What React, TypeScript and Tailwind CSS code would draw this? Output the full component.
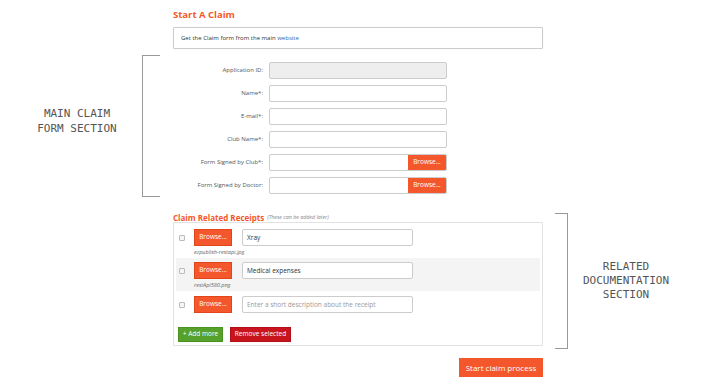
import React from "react";

const orange = "bg-[#f4572b]";

function Field({ label, disabled, browse }: { label: string; disabled?: boolean; browse?: boolean }) {
  return (
    <div className="flex items-center h-[17px]">
      <label className="w-[96px] pr-[6px] text-right text-[6px] text-[#555] whitespace-nowrap">{label}</label>
      <div
        className={`flex w-[178px] h-[17px] border border-[#ccc] rounded-[2px] overflow-hidden ${
          disabled ? "bg-[#eee]" : "bg-white"
        }`}
      >
        <div className="flex-1" />
        {browse && (
          <button className={`w-[38px] h-full ${orange} text-white text-[6.5px] leading-none`}>Browse...</button>
        )}
      </div>
    </div>
  );
}

function Receipt({
  value,
  placeholder,
  file,
  top,
}: {
  value?: string;
  placeholder?: string;
  file?: string;
  top: string;
}) {
  return (
    <div className={`${top} pl-[3px]`}>
      <div className="flex items-center h-[17px]">
        <span className="w-[6px] h-[6px] border border-[#bbb] rounded-[1px] bg-[#f6f6f6]" />
        <button className={`ml-[9px] w-[38px] h-[17px] ${orange} text-white text-[6.5px] leading-none border border-[#e0451c]`}>
          Browse...
        </button>
        <div className="ml-[10px] w-[171px] h-[17px] border border-[#ccc] rounded-[2px] bg-white flex items-center px-[4px] text-[6.5px]">
          {value ? <span className="text-[#333]">{value}</span> : <span className="text-[#999]">{placeholder}</span>}
        </div>
      </div>
      {file && (
        <div className="pl-[15px] h-[12px] flex items-center text-[5.5px] italic text-[#666]">{file}</div>
      )}
    </div>
  );
}

export default function App() {
  return (
    <div className="w-[720px] h-[382px] bg-white font-['Open_Sans',sans-serif] overflow-hidden">
      <div className="flex">
        <div className="w-[173px]" />
        <div className="w-[370px]">
          <h1 className="mt-[8px] h-[14px] leading-[14px] text-[9.5px] font-bold text-[#f4572b]">Start A Claim</h1>
          <div className="mt-[5px] h-[22px] border border-[#ccc] rounded-[1px] shadow-[0_0_1px_rgba(0,0,0,0.15)] flex items-center px-[7px] text-[6px] text-[#333]">
            Get the Claim form from the main&nbsp;<span className="text-[#2b67b1]">website</span>
          </div>
        </div>
      </div>

      <div className="flex mt-[6px] h-[142px]">
        <div className="w-[173px] flex">
          <div className="w-[142px] pl-[12px] pb-[11px] flex flex-col justify-center text-center font-['DejaVu_Sans_Mono',monospace] text-[11px] leading-[15px] text-[#555]">
            <div>MAIN CLAIM</div>
            <div>FORM SECTION</div>
          </div>
          <div className="w-[18px] h-full border-l-[1.5px] border-t-[1.5px] border-b-[1.5px] border-[#999]" />
        </div>
        <div className="w-[370px] pt-[7px] flex flex-col gap-[6px]">
          <Field label="Application ID:" disabled />
          <Field label="Name*:" />
          <Field label="E-mail*:" />
          <Field label="Club Name*:" />
          <Field label="Form Signed by Club*:" browse />
          <Field label="Form Signed by Doctor:" browse />
        </div>
      </div>

      <div className="flex mt-[13px]">
        <div className="w-[173px]" />
        <div className="w-[370px]">
          <div className="h-[12px] flex items-center gap-[3px] pt-[3px]">
            <span className="text-[8px] font-bold text-[#f4572b]">Claim Related Receipts</span>
            <span className="text-[5.3px] italic text-[#888]">(These can be added later)</span>
          </div>
          <div className="h-[124px] border border-[#e2e2e2] rounded-[1px] flex flex-col">
            <div className="h-[35px] mx-[2px]">
              <Receipt top="pt-[6px]" value="Xray" file="ezpublish-restapi.jpg" />
            </div>
            <div className="h-[33px] bg-[#f4f4f4] mx-[2px]">
              <Receipt top="pt-[4px]" value="Medical expenses" file="restApi580.png" />
            </div>
            <div className="mx-[2px]">
              <Receipt top="pt-[5px]" placeholder="Enter a short description about the receipt" />
            </div>
            <div className="mt-[14px] pl-[4px] flex gap-[7px]">
              <button className="h-[15px] w-[45px] bg-[#55a12b] border border-[#4a9122] text-white text-[6.5px] leading-none">
                + Add more
              </button>
              <button className="h-[15px] w-[61px] bg-[#c8141c] border border-[#b20f16] text-white text-[6.5px] leading-none">
                Remove selected
              </button>
            </div>
          </div>
          <div className="mt-[12px] flex justify-end">
            <button className={`w-[84px] h-[19px] ${orange} text-white text-[8px] leading-none`}>
              Start claim process
            </button>
          </div>
        </div>
        <div className="flex h-[136px] mt-[3px]">
          <div className="w-[12px]" />
          <div className="w-[13px] h-full border-r-[1.5px] border-t-[1.5px] border-b-[1.5px] border-[#999]" />
          <div className="w-[116px] flex flex-col justify-center text-center font-['DejaVu_Sans_Mono',monospace] text-[11px] leading-[14px] text-[#555]">
            <div>RELATED</div>
            <div>DOCUMENTATION</div>
            <div>SECTION</div>
          </div>
        </div>
      </div>
    </div>
  );
}
